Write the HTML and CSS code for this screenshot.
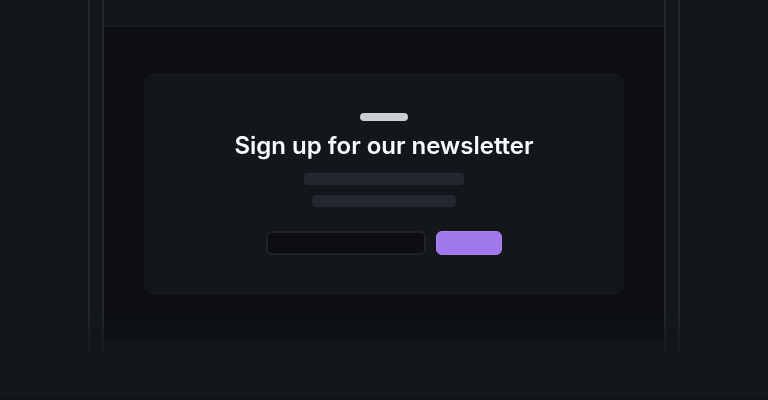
FILE: index.html
```html
<!DOCTYPE html>
<html lang="en">
<head>
    <meta charset="UTF-8">
    <meta name="viewport" content="width=device-width, initial-scale=1.0">
    <title>Newsletter</title>
    <link rel="stylesheet" href="styles.css">
</head>
<body>
    <div class="frame">
        <div class="page">
            <div class="topbar"></div>
            <main class="content">
                <section class="card">
                    <div class="eyebrow"></div>
                    <h1>Sign up for our newsletter</h1>
                    <div class="line"></div>
                    <div class="line line-short"></div>
                    <form class="signup">
                        <input type="email" class="email" aria-label="Email address">
                        <button type="button" class="submit" aria-label="Sign up"></button>
                    </form>
                </section>
            </main>
        </div>
    </div>
</body>
</html>
```

FILE: styles.css
```css
* {
    box-sizing: border-box;
}
body {
    margin: 0;
    min-height: 100vh;
    padding: 0 88px;
    background-color: #13171b;
    border-bottom: 2px solid #111318;
    font-family: Inter, sans-serif;
}
.frame {
    max-width: 592px;
    margin: 0 auto;
    padding: 0 12px;
    border: solid #24282c;
    border-width: 0 2px;
    /* fade the window out towards the bottom */
    -webkit-mask-image: linear-gradient(#000 310px, transparent 360px);
    mask-image: linear-gradient(#000 310px, transparent 360px);
}
.page {
    padding-bottom: 24px;
    border: solid #24282c;
    border-width: 0 2px;
}
.topbar {
    height: 27px;
    border-bottom: 2px solid #171b1f;
}
.content {
    padding: 46px 40px 48px;
    background-color: #0c0e12;
}
.card {
    display: flex;
    flex-direction: column;
    align-items: center;
    padding: 40px;
    border-radius: 12px;
    background-color: #13171b;
}
.eyebrow {
    width: 48px;
    height: 8px;
    border-radius: 4px;
    background-color: #cbced3;
}
h1 {
    margin: 8px 0 10px;
    font-size: 24px;
    line-height: 34px;
    font-weight: 600;
    color: #f9fafb;
    white-space: nowrap;
}
.line {
    width: 160px;
    height: 12px;
    border-radius: 4px;
    background-color: #242731;
}
.line-short {
    width: 144px;
    margin-top: 10px;
}
.signup {
    display: flex;
    gap: 10px;
    margin-top: 24px;
}
.email {
    width: 160px;
    height: 24px;
    padding: 0 8px;
    border: 2px solid #1f2227;
    border-radius: 6px;
    background-color: #0c0e12;
    color: #f9fafb;
}
.submit {
    width: 66px;
    height: 24px;
    padding: 0;
    border: 1px solid #aa87ec;
    border-radius: 6px;
    background-color: #a078eb;
}
```
